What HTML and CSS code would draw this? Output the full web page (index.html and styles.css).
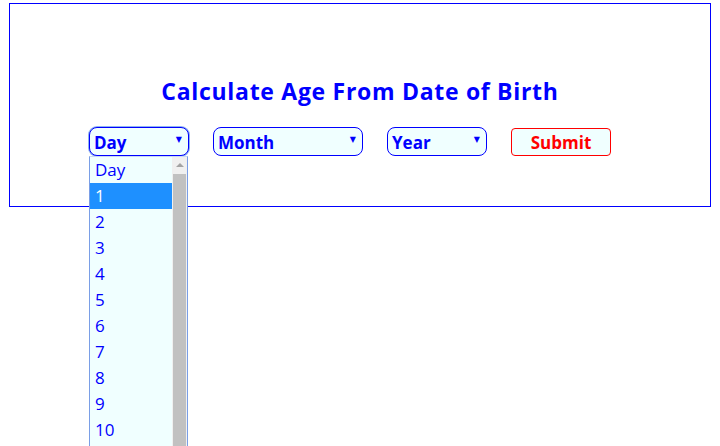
FILE: index.html
```html
<!DOCTYPE html>
<html>
<head>
<meta charset="utf-8">
<link rel="stylesheet" href="styles.css">
</head>
<body>
<div class="box">
  <h1 class="title">Calculate Age From Date of Birth</h1>
  <div class="row">
    <div class="day-wrap">
      <div class="sel sel-day focused"><span>Day</span><span class="arrow">▼</span></div>
      <div class="dropdown">
        <div class="list">
          <div class="opt">Day</div>
          <div class="opt active">1</div>
          <div class="opt">2</div>
          <div class="opt">3</div>
          <div class="opt">4</div>
          <div class="opt">5</div>
          <div class="opt">6</div>
          <div class="opt">7</div>
          <div class="opt">8</div>
          <div class="opt">9</div>
          <div class="opt">10</div>
        </div>
        <div class="scroll">
          <div class="up"></div>
          <div class="thumb"></div>
        </div>
      </div>
    </div>
    <div class="sel sel-month"><span>Month</span><span class="arrow">▼</span></div>
    <div class="sel sel-year"><span>Year</span><span class="arrow">▼</span></div>
    <div class="btn">Submit</div>
  </div>
</div>
</body>
</html>
```

FILE: styles.css
```css
html, body {
  margin: 0;
  padding: 0;
  background: #fff;
  overflow: hidden;
}
body {
  font-family: "Open Sans", "DejaVu Sans", sans-serif;
  width: 720px;
  height: 446px;
}
.box {
  margin: 3px 0 0 9px;
  width: 700px;
  height: 202px;
  border: 1px solid #0000ff;
  display: flex;
  flex-direction: column;
  align-items: center;
}
.title {
  margin: 69px 0 0 0;
  font-size: 23px;
  font-weight: 700;
  color: #0000ff;
  letter-spacing: 0.7px;
  line-height: 36px;
}
.row {
  margin-top: 18px;
  display: flex;
  align-items: center;
  gap: 24px;
  margin-right: 20px;
}
.day-wrap {
  position: relative;
}
.sel {
  box-sizing: border-box;
  height: 29px;
  border: 1px solid #0000ff;
  border-radius: 8px;
  background: #f0ffff;
  color: #0000ff;
  font-weight: 700;
  font-size: 17px;
  display: flex;
  align-items: center;
  justify-content: space-between;
  padding: 2px 6px 0 4px;
}
.sel.focused {
  box-shadow: 0 0 0 1px #8fb3f0;
}
.sel-day, .sel-year { width: 100px; }
.sel-month { width: 150px; }
.arrow {
  font-size: 8px;
  margin-top: -8px;
}
.btn {
  box-sizing: border-box;
  width: 100px;
  height: 28px;
  border: 1px solid #ff0000;
  border-radius: 4px;
  background: #f0ffff;
  color: #ff0000;
  font-weight: 700;
  font-size: 17px;
  display: flex;
  align-items: center;
  justify-content: center;
  padding-top: 2px;
}
.dropdown {
  position: absolute;
  left: 0;
  top: 29px;
  width: 99px;
  height: 290px;
  box-sizing: border-box;
  border: 1px solid #7a9ee6;
  border-top: 1px solid #c8d8f4;
  border-bottom: 0;
  background: #f0ffff;
  display: flex;
  overflow: hidden;
  z-index: 2;
}
.list {
  flex: 1;
}
.opt {
  height: 26px;
  line-height: 26px;
  padding-left: 5px;
  font-size: 17px;
  color: #0000ff;
}
.opt.active {
  background: #1e90ff;
  color: #fff;
}
.scroll {
  width: 15px;
  background: #f0f0f0;
  display: flex;
  flex-direction: column;
  align-items: center;
}
.up {
  margin-top: 6px;
  width: 0;
  height: 0;
  border-left: 4px solid transparent;
  border-right: 4px solid transparent;
  border-bottom: 4px solid #a3a3a3;
}
.thumb {
  margin-top: 7px;
  width: 13px;
  flex: 1;
  background: #c1c1c1;
}
```
